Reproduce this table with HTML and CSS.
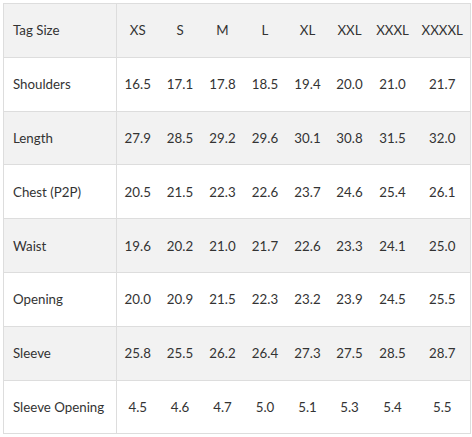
FILE: index.html
```html
<!DOCTYPE html>
<html>
<head>
<meta charset="utf-8">
<link rel="stylesheet" href="styles.css">
</head>
<body>
<div class="wrap">
<table class="size-table">
  <colgroup>
    <col class="c-label"><col class="c-xs"><col class="c-s"><col class="c-m"><col class="c-l"><col class="c-xl"><col class="c-xxl"><col class="c-xxxl"><col class="c-xxxxl">
  </colgroup>
  <tr class="alt"><td class="label">Tag Size</td><td>XS</td><td>S</td><td>M</td><td>L</td><td>XL</td><td>XXL</td><td>XXXL</td><td>XXXXL</td></tr>
  <tr><td class="label">Shoulders</td><td>16.5</td><td>17.1</td><td>17.8</td><td>18.5</td><td>19.4</td><td>20.0</td><td>21.0</td><td>21.7</td></tr>
  <tr class="alt"><td class="label">Length</td><td>27.9</td><td>28.5</td><td>29.2</td><td>29.6</td><td>30.1</td><td>30.8</td><td>31.5</td><td>32.0</td></tr>
  <tr><td class="label">Chest (P2P)</td><td>20.5</td><td>21.5</td><td>22.3</td><td>22.6</td><td>23.7</td><td>24.6</td><td>25.4</td><td>26.1</td></tr>
  <tr class="alt"><td class="label">Waist</td><td>19.6</td><td>20.2</td><td>21.0</td><td>21.7</td><td>22.6</td><td>23.3</td><td>24.1</td><td>25.0</td></tr>
  <tr><td class="label">Opening</td><td>20.0</td><td>20.9</td><td>21.5</td><td>22.3</td><td>23.2</td><td>23.9</td><td>24.5</td><td>25.5</td></tr>
  <tr class="alt"><td class="label">Sleeve</td><td>25.8</td><td>25.5</td><td>26.2</td><td>26.4</td><td>27.3</td><td>27.5</td><td>28.5</td><td>28.7</td></tr>
  <tr><td class="label">Sleeve Opening</td><td>4.5</td><td>4.6</td><td>4.7</td><td>5.0</td><td>5.1</td><td>5.3</td><td>5.4</td><td>5.5</td></tr>
</table>
</div>
</body>
</html>
```
FILE: styles.css
```css
html, body {
  margin: 0;
  padding: 0;
  background: #fff;
}
.wrap {
  padding: 3px 0 0 3px;
}
.size-table {
  border-collapse: collapse;
  table-layout: fixed;
  width: 467px;
  font-family: Lato, "Liberation Sans", sans-serif;
  font-size: 13.3px;
  color: #333;
  border: 1px solid #dddddd;
}
.c-label { width: 113px; }
.c-xs { width: 42px; }
.c-s { width: 43px; }
.c-m { width: 42px; }
.c-l { width: 43px; }
.c-xl { width: 42px; }
.c-xxl { width: 42px; }
.c-xxxl { width: 44px; }
.c-xxxxl { width: 56px; }
.size-table tr {
  height: 53.8px;
  border-top: 1px solid #dddddd;
}
.size-table tr.alt {
  background: #f2f2f2;
}
.size-table td {
  padding: 0;
  text-align: center;
  vertical-align: middle;
  white-space: nowrap;
}
.size-table td.label {
  text-align: left;
  padding-left: 9px;
  border-right: 1px solid #dddddd;
}
```
